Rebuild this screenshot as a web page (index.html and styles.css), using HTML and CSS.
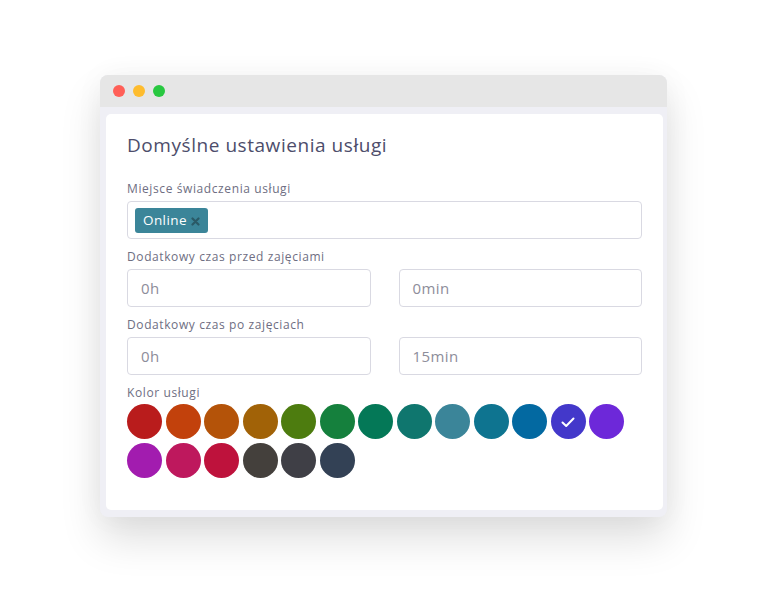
FILE: index.html
```html
<!DOCTYPE html>
<html lang="pl">
<head>
<meta charset="utf-8">
<title>Domyślne ustawienia usługi</title>
<link rel="stylesheet" href="styles.css">
</head>
<body>
<div class="window">
  <div class="titlebar">
    <span class="dot dot-red"></span>
    <span class="dot dot-yellow"></span>
    <span class="dot dot-green"></span>
  </div>
  <div class="frame">
    <div class="card">
      <h1 class="title">Domyślne ustawienia usługi</h1>
      <div class="field">
        <label class="label">Miejsce świadczenia usługi</label>
        <div class="input tags">
          <span class="tag"><span class="tag-text">Online</span><svg class="tag-x" width="9" height="9" viewBox="0 0 9 9"><path d="M1.5 1.5 L7.5 7.5 M7.5 1.5 L1.5 7.5" stroke="#2a5966" stroke-width="2.2" stroke-linecap="round"/></svg></span>
        </div>
      </div>
      <div class="field">
        <label class="label">Dodatkowy czas przed zajęciami</label>
        <div class="pair">
          <div class="input">0h</div>
          <div class="input">0min</div>
        </div>
      </div>
      <div class="field">
        <label class="label">Dodatkowy czas po zajęciach</label>
        <div class="pair">
          <div class="input">0h</div>
          <div class="input">15min</div>
        </div>
      </div>
      <div class="field">
        <label class="label">Kolor usługi</label>
        <div class="swatches">
          <span class="sw c1"></span>
          <span class="sw c2"></span>
          <span class="sw c3"></span>
          <span class="sw c4"></span>
          <span class="sw c5"></span>
          <span class="sw c6"></span>
          <span class="sw c7"></span>
          <span class="sw c8"></span>
          <span class="sw c9"></span>
          <span class="sw c10"></span>
          <span class="sw c11"></span>
          <span class="sw c12 selected"><svg width="16" height="16" viewBox="0 0 16 16"><path d="M2.5 8.5 L6.2 12 L13.5 4.5" fill="none" stroke="#fff" stroke-width="2" stroke-linecap="round" stroke-linejoin="round"/></svg></span>
          <span class="sw c13"></span>
          <span class="sw c14"></span>
          <span class="sw c15"></span>
          <span class="sw c16"></span>
          <span class="sw c17"></span>
          <span class="sw c18"></span>
          <span class="sw c19"></span>
        </div>
      </div>
    </div>
  </div>
</div>
</body>
</html>
```

FILE: styles.css
```css
html, body {
  margin: 0;
  padding: 0;
  background: #ffffff;
}
body {
  padding: 75px 100px;
  font-family: "Open Sans", "Noto Sans", sans-serif;
}
.window {
  width: 567px;
  border-radius: 8px;
  background: #efeff5;
  box-shadow: 0 22px 40px rgba(0, 0, 0, 0.13), 0 0 30px rgba(0, 0, 0, 0.04);
  overflow: hidden;
}
.titlebar {
  height: 32px;
  background: #e6e6e6;
  display: flex;
  align-items: center;
  gap: 8px;
  padding-left: 13px;
}
.dot {
  width: 12px;
  height: 12px;
  border-radius: 50%;
}
.dot-red { background: #ff5f57; }
.dot-yellow { background: #febc2e; }
.dot-green { background: #28c840; }
.frame {
  padding: 7px 4px 7px 6px;
}
.card {
  background: #ffffff;
  border-radius: 5px;
  padding: 19px 21px 32px 21px;
  display: flex;
  flex-direction: column;
  gap: 10px;
}
.title {
  margin: 0 0 14px 0;
  font-size: 19px;
  line-height: 24px;
  font-weight: 400;
  letter-spacing: 0.55px;
  color: #4d4d6b;
}
.field {
  display: flex;
  flex-direction: column;
  gap: 4px;
}
.label {
  font-size: 12px;
  line-height: 16px;
  letter-spacing: 0.6px;
  color: #6e6e82;
}
.input {
  height: 38px;
  box-sizing: border-box;
  border: 1px solid #d9d9e2;
  border-radius: 4px;
  padding: 0 13px;
  display: flex;
  align-items: center;
  font-size: 15px;
  letter-spacing: 0.4px;
  color: #8d8d9a;
}
.tags {
  padding: 0 7px;
}
.tag {
  background: #3b8599;
  color: #ffffff;
  border-radius: 3px;
  height: 25px;
  padding: 0 8px 0 8px;
  display: flex;
  align-items: center;
  font-size: 13.5px;
  letter-spacing: 0.4px;
  gap: 4px;
}
.tag-x {
  margin-top: 2px;
}
.pair {
  display: grid;
  grid-template-columns: 1fr 1fr;
  gap: 28px;
}
.swatches {
  display: flex;
  flex-wrap: wrap;
  column-gap: 3.5px;
  row-gap: 4px;
  margin-top: -1px;
}
.sw {
  width: 35px;
  height: 35px;
  border-radius: 50%;
  display: flex;
  align-items: center;
  justify-content: center;
}
.c1 { background: #b91c1c; }
.c2 { background: #c2410c; }
.c3 { background: #b45309; }
.c4 { background: #a16207; }
.c5 { background: #4d7c0f; }
.c6 { background: #15803d; }
.c7 { background: #047857; }
.c8 { background: #0f766e; }
.c9 { background: #3b8599; }
.c10 { background: #0e7490; }
.c11 { background: #0369a1; }
.c12 { background: #4338ca; }
.c13 { background: #6d28d9; }
.c14 { background: #a21caf; }
.c15 { background: #be185d; }
.c16 { background: #be123c; }
.c17 { background: #44403c; }
.c18 { background: #3f3f46; }
.c19 { background: #334155; }
```
